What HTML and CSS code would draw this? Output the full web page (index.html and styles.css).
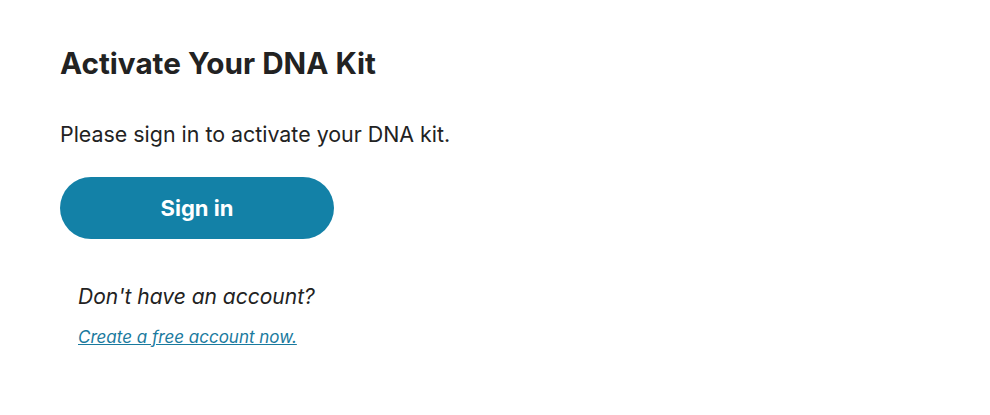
FILE: index.html
```html
<!DOCTYPE html>
<html lang="en">
<head>
<meta charset="utf-8">
<link rel="stylesheet" href="styles.css">
</head>
<body>
<main class="page">
  <h1 class="title">Activate Your DNA Kit</h1>
  <p class="lead">Please sign in to activate your DNA kit.</p>
  <button class="btn" type="button">Sign in</button>
  <div class="signup">
    <p class="question">Don't have an account?</p>
    <a class="link" href="#">Create a free account now.</a>
  </div>
</main>
</body>
</html>
```
FILE: styles.css
```css
html, body {
  margin: 0;
  padding: 0;
  background: #fff;
}
body {
  font-family: Inter, "Liberation Sans", Arial, sans-serif;
  color: #222;
}
.page {
  padding: 43px 60px 0;
  display: flex;
  flex-direction: column;
  align-items: flex-start;
}
.title {
  margin: 0;
  font-size: 29.7px;
  line-height: 40px;
  font-weight: 700;
  color: #222;
}
.lead {
  margin: 37px 0 0;
  font-size: 21.4px;
  line-height: 28px;
}
.btn {
  margin-top: 29px;
  width: 274px;
  height: 62px;
  border: none;
  border-radius: 31px;
  background: #1381a7;
  color: #fff;
  font-family: inherit;
  font-size: 22px;
  font-weight: 700;
  cursor: pointer;
}
.signup {
  margin-top: 45px;
  padding-left: 18px;
  display: flex;
  flex-direction: column;
  gap: 16px;
}
.question {
  margin: 0;
  font-size: 21px;
  font-style: italic;
  line-height: 26px;
}
.link {
  font-size: 17px;
  font-style: italic;
  color: #1a7a9e;
  text-decoration: underline;
  line-height: 22px;
}
```
